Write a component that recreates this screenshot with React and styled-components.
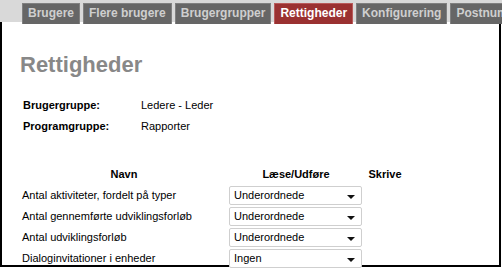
import React from 'react'
import styled, { createGlobalStyle } from 'styled-components'

const GlobalStyle = createGlobalStyle`
  html, body {
    margin: 0;
    padding: 0;
    background: #fff;
    font-family: "Liberation Sans", Arial, sans-serif;
  }
`

const tabs = ['Brugere', 'Flere brugere', 'Brugergrupper', 'Rettigheder', 'Konfigurering', 'Postnumre']

const rows = [
  { name: 'Antal aktiviteter, fordelt på typer', value: 'Underordnede' },
  { name: 'Antal gennemførte udviklingsforløb', value: 'Underordnede' },
  { name: 'Antal udviklingsforløb', value: 'Underordnede' },
  { name: 'Dialoginvitationer i enheder', value: 'Ingen' },
]

const App = () => {
  return (
    <Page>
      <GlobalStyle />
      <TabBar>
        {tabs.map(tab => (
          <Tab key={tab} active={tab === 'Rettigheder'}>
            {tab}
          </Tab>
        ))}
      </TabBar>
      <Frame>
        <Title>Rettigheder</Title>
        <InfoGrid>
          <InfoLabel>Brugergruppe:</InfoLabel>
          <InfoValue>Ledere - Leder</InfoValue>
          <InfoLabel>Programgruppe:</InfoLabel>
          <InfoValue>Rapporter</InfoValue>
        </InfoGrid>
        <Table>
          <thead>
            <Row>
              <Th>Navn</Th>
              <Th>Læse/Udføre</Th>
              <Th>Skrive</Th>
            </Row>
          </thead>
          <tbody>
            {rows.map(row => (
              <Row key={row.name}>
                <NameCell>{row.name}</NameCell>
                <Td>
                  <Select>
                    <span>{row.value}</span>
                    <Arrow />
                  </Select>
                </Td>
                <Td />
              </Row>
            ))}
          </tbody>
        </Table>
      </Frame>
    </Page>
  )
}

const Page = styled.div`
  width: 502px;
  height: 269px;
  overflow: hidden;
`

const TabBar = styled.div`
  display: flex;
  gap: 3px;
  height: 24px;
  padding-left: 22px;
  padding-top: 3px;
  box-sizing: border-box;
  background: linear-gradient(#d9d9d9 0, #d9d9d9 22px, #fff 22px);
  white-space: nowrap;
  overflow: hidden;
`

const Tab = styled.div`
  flex: none;
  height: 21px;
  box-sizing: border-box;
  padding: 0 5px;
  line-height: 19px;
  font-size: 12px;
  font-weight: bold;
  color: ${p => (p.active ? '#ffffff' : '#cfcfcf')};
  background: ${p => (p.active ? '#9a3131' : '#666666')};
  border: 1px solid ${p => (p.active ? '#b85a5a' : '#808080')};
  border-bottom: none;
`

const Frame = styled.div`
  width: 501px;
  height: 245px;
  margin-top: -2px;
  box-sizing: border-box;
  border-left: 2px solid #000;
  border-right: 2px solid #000;
  border-bottom: 2px solid #000;
  padding: 30px 0 0 18px;
`

const Title = styled.h1`
  margin: 0;
  font-size: 22px;
  font-weight: bold;
  color: #888888;
  line-height: 26px;
`

const InfoGrid = styled.div`
  display: grid;
  grid-template-columns: 118px auto;
  row-gap: 6px;
  margin: 20px 0 0 3px;
  font-size: 11px;
  line-height: 15px;
  color: #000;
`

const InfoLabel = styled.div`
  font-weight: bold;
`

const InfoValue = styled.div``

const Table = styled.table`
  margin-top: 30px;
  border-collapse: collapse;
  table-layout: fixed;
  font-size: 11px;
  line-height: 13px;
  color: #000;
`

const Row = styled.tr`
  height: 21px;
`

const Th = styled.th`
  padding: 0;
  font-weight: bold;
  text-align: center;
  vertical-align: middle;

  &:nth-child(1) {
    width: 208px;
  }
  &:nth-child(2) {
    width: 136px;
  }
  &:nth-child(3) {
    width: 42px;
  }
`

const Td = styled.td`
  padding: 0;
  vertical-align: middle;
`

const NameCell = styled(Td)`
  padding-left: 2px;
`

const Select = styled.div`
  position: relative;
  width: 133px;
  height: 19px;
  box-sizing: border-box;
  margin-left: 1px;
  padding: 0 0 0 4px;
  line-height: 17px;
  border: 1px solid #cfcfcf;
  border-radius: 2px;
  background: #fff;
`

const Arrow = styled.span`
  position: absolute;
  right: 6px;
  top: 8px;
  width: 0;
  height: 0;
  border-left: 4px solid transparent;
  border-right: 4px solid transparent;
  border-top: 4px solid #111;
`

export default App
